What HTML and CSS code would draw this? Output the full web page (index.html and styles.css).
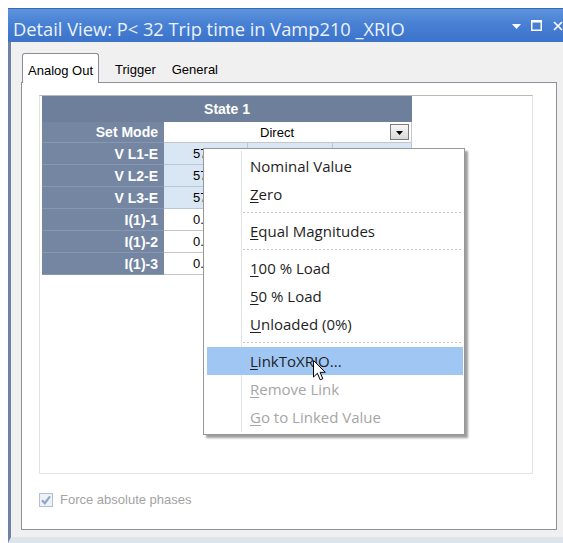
FILE: index.html
```html
<!DOCTYPE html>
<html>
<head>
<meta charset="utf-8">
<title>Detail View</title>
<link rel="stylesheet" href="styles.css">
</head>
<body>
<div class="window">
  <div class="titlebar">
    <span class="title">Detail View: P&lt; 32 Trip time in Vamp210 _XRIO</span>
    <div class="controls">
      <svg class="ctl-menu" width="9" height="5" viewBox="0 0 9 5"><path d="M0 0h9L4.5 5z" fill="#fff"/></svg>
      <svg class="ctl-max" width="11" height="11" viewBox="0 0 11 11"><rect x="0.75" y="1" width="9.5" height="9.25" fill="none" stroke="#fff" stroke-width="1.5"/><rect x="0" y="0" width="11" height="2.5" fill="#fff"/></svg>
      <svg class="ctl-close" width="10" height="10" viewBox="0 0 10 10"><path d="M1 1l8 8M9 1l-8 8" stroke="#fff" stroke-width="1.7"/></svg>
    </div>
  </div>

  <div class="client">
    <div class="tabs">
      <div class="tab active">Analog Out</div>
      <div class="tab">Trigger</div>
      <div class="tab">General</div>
    </div>

    <div class="panel">
      <div class="gridframe">
        <table class="grid">
          <colgroup>
            <col class="c-label"><col class="c-mag"><col class="c-phase"><col class="c-freq">
          </colgroup>
          <thead>
            <tr><th class="head" colspan="4">State 1</th></tr>
          </thead>
          <tbody>
            <tr class="r-mode">
              <td class="lbl">Set Mode</td>
              <td class="val mode" colspan="3">
                <div class="combo">
                  <span class="combo-text">Direct</span>
                  <span class="combo-btn"><svg width="7" height="4" viewBox="0 0 7 4"><path d="M0 0h7L3.5 4z" fill="#000"/></svg></span>
                </div>
              </td>
            </tr>
            <tr class="r-v">
              <td class="lbl">V L1-E</td>
              <td class="val">57.735 V</td><td class="val"></td><td class="val"></td>
            </tr>
            <tr class="r-v">
              <td class="lbl">V L2-E</td>
              <td class="val">57.735 V</td><td class="val"></td><td class="val"></td>
            </tr>
            <tr class="r-v">
              <td class="lbl">V L3-E</td>
              <td class="val">57.735 V</td><td class="val"></td><td class="val"></td>
            </tr>
            <tr class="r-i">
              <td class="lbl">I(1)-1</td>
              <td class="val">0.000 A</td><td class="val"></td><td class="val"></td>
            </tr>
            <tr class="r-i">
              <td class="lbl">I(1)-2</td>
              <td class="val">0.000 A</td><td class="val"></td><td class="val"></td>
            </tr>
            <tr class="r-i">
              <td class="lbl">I(1)-3</td>
              <td class="val">0.000 A</td><td class="val"></td><td class="val"></td>
            </tr>
          </tbody>
        </table>
      </div>

      <label class="check">
        <svg width="14" height="14" viewBox="0 0 14 14"><rect x="0.5" y="0.5" width="13" height="13" fill="#eef2f7" stroke="#b4c0d0"/><path d="M3 7.2 L5.8 10.2 L11 3.4" fill="none" stroke="#8ea8c9" stroke-width="2.2"/></svg>
        <span>Force absolute phases</span>
      </label>
    </div>
  </div>

  <div class="menu">
    <div class="mi">Nominal Value</div>
    <div class="mi"><u>Z</u>ero</div>
    <div class="sep"></div>
    <div class="mi"><u>E</u>qual Magnitudes</div>
    <div class="sep"></div>
    <div class="mi"><u>1</u>00 % Load</div>
    <div class="mi"><u>5</u>0 % Load</div>
    <div class="mi"><u>U</u>nloaded (0%)</div>
    <div class="sep"></div>
    <div class="mi hot"><u>L</u>inkToXRIO...</div>
    <div class="mi off"><u>R</u>emove Link</div>
    <div class="mi off"><u>G</u>o to Linked Value</div>
  </div>

  <svg class="cursor" width="13" height="21" viewBox="0 0 13 21"><path d="M0.5 0.5 V17 L4.4 13.3 L7.2 19.8 L9.8 18.7 L7.1 12.3 H12.3 Z" fill="#fff" stroke="#000" stroke-width="1" stroke-linejoin="round"/></svg>
</div>
</body>
</html>
```

FILE: styles.css
```css
html, body {
  margin: 0;
  padding: 0;
}

body {
  width: 563px;
  height: 543px;
  overflow: hidden;
  background: #fff;
  font-family: "Liberation Sans", Arial, sans-serif;
  font-size: 13px;
  color: #000;
}

/* ---------- window frame ---------- */
.window {
  position: relative;
  margin: 8px 0 0 8px;
  width: 562px;
  height: 535px;
  display: flex;
  flex-direction: column;
}

.titlebar {
  flex: none;
  height: 34px;
  box-sizing: border-box;
  display: flex;
  align-items: flex-start;
  padding-left: 5px;
  background: linear-gradient(#5e93dc, #4880d4 45%, #3c73cb);
  border-top: 1px solid #3a68b3;
}

.title {
  font-family: "Open Sans", "Noto Sans", sans-serif;
  font-size: 18.3px;
  line-height: 23px;
  margin-top: 8px;
  color: #eaf2fd;
  white-space: nowrap;
}

.controls {
  margin-left: auto;
  height: 33px;
  display: flex;
  align-items: center;
  padding-right: 7px;
}

.ctl-menu { margin-top: 2px; }
.ctl-max { margin-left: 10px; }
.ctl-close { margin-left: 11px; }

.client {
  flex: 1;
  box-sizing: border-box;
  background: #f0f0f0;
  border-left: 3px solid #6f82a1;
  border-bottom: 6px solid #dde4ec;
  padding: 11px 0 0 10px;
}

/* ---------- tabs ---------- */
.tabs {
  position: relative;
  z-index: 1;
  height: 29px;
  display: flex;
  align-items: flex-end;
}

.tab {
  height: 28px;
  box-sizing: border-box;
  padding: 3px 8px 0;
  line-height: 25px;
  white-space: nowrap;
}

.tab.active {
  height: 30px;
  margin: 0 8px -1px 1px;
  padding: 4px 5px 0;
  background: #fff;
  border: 1px solid #898c95;
  border-bottom: none;
  border-radius: 3px 3px 0 0;
}

/* ---------- tab page ---------- */
.panel {
  width: 536px;
  height: 448px;
  box-sizing: border-box;
  background: #fff;
  border: 1px solid #8e929b;
  padding: 12px 0 0 17px;
}

.gridframe {
  width: 494px;
  height: 379px;
  box-sizing: border-box;
  border: 1px solid #e3e3e3;
  border-top-color: #b9b9b9;
  padding-left: 2px;
}

.grid {
  width: 370px;
  table-layout: fixed;
  border-collapse: separate;
  border-spacing: 0;
}

.c-label { width: 122px; }
.c-mag { width: 84px; }
.c-phase { width: 85px; }
.c-freq { width: 79px; }

.grid th,
.grid td {
  padding: 0;
  box-sizing: border-box;
  white-space: nowrap;
  overflow: hidden;
}

.head {
  height: 26px;
  background: #6d7f9b;
  color: #fff;
  font-weight: bold;
  font-size: 14px;
  text-align: center;
}

.grid td { height: 22px; }
.grid .r-mode td { height: 21px; }

.lbl {
  background: #7486a2;
  color: #fff;
  font-weight: bold;
  font-size: 14px;
  text-align: right;
  padding-right: 6px !important;
  border-bottom: 1px solid #8797b0;
}

.val {
  padding-left: 29px !important;
  border-right: 1px solid #c6c6c6;
  border-bottom: 1px solid #c6c6c6;
  background: #fff;
}

.r-v .val {
  background: #d9e6f4;
  border-color: #b7c7da;
}

.val.mode {
  padding: 0 2px 0 0 !important;
}

.combo {
  display: flex;
  align-items: center;
}

.combo-text {
  flex: 1;
  text-align: center;
}

.combo-btn {
  width: 19px;
  height: 16px;
  box-sizing: border-box;
  border: 1px solid #7c7c7c;
  background: linear-gradient(#f7f7f7, #d9d9d9);
  display: flex;
  align-items: center;
  justify-content: center;
  padding-top: 2px;
}

.check {
  margin-top: 18px;
  display: flex;
  align-items: center;
  gap: 7px;
  color: #a3a3a3;
}

/* ---------- context menu ---------- */
.menu {
  position: absolute;
  left: 195px;
  top: 140px;
  width: 262px;
  box-sizing: border-box;
  padding: 3px 0;
  background: #fff;
  border: 1px solid #979797;
  box-shadow: 3px 3px 2px rgba(0, 0, 0, 0.38);
  font-family: "Open Sans", "Noto Sans", sans-serif;
  font-size: 15px;
  color: #1e1e1e;
  z-index: 5;
}

.menu::before {
  content: "";
  position: absolute;
  left: 37px;
  top: 2px;
  bottom: 2px;
  width: 1px;
  background: #e2e3e3;
  box-shadow: 1px 0 0 #fff;
}

.mi {
  position: relative;
  height: 28px;
  line-height: 28px;
  margin: 0 1px 0 3px;
  padding-left: 43px;
  white-space: nowrap;
}

.mi u {
  text-decoration-thickness: 1px;
  text-underline-offset: 2px;
}

.mi.hot {
  background: #a0c7f4;
}

.mi.off {
  color: #a6a6a6;
}

.sep {
  position: relative;
  height: 9px;
  margin-left: 39px;
}

.sep::after {
  content: "";
  position: absolute;
  left: 0;
  right: 1px;
  top: 4px;
  height: 1px;
  background: repeating-linear-gradient(to right, #c4c4c4 0 2px, transparent 2px 4px);
}

.cursor {
  position: absolute;
  left: 305px;
  top: 352px;
  z-index: 6;
}
```
